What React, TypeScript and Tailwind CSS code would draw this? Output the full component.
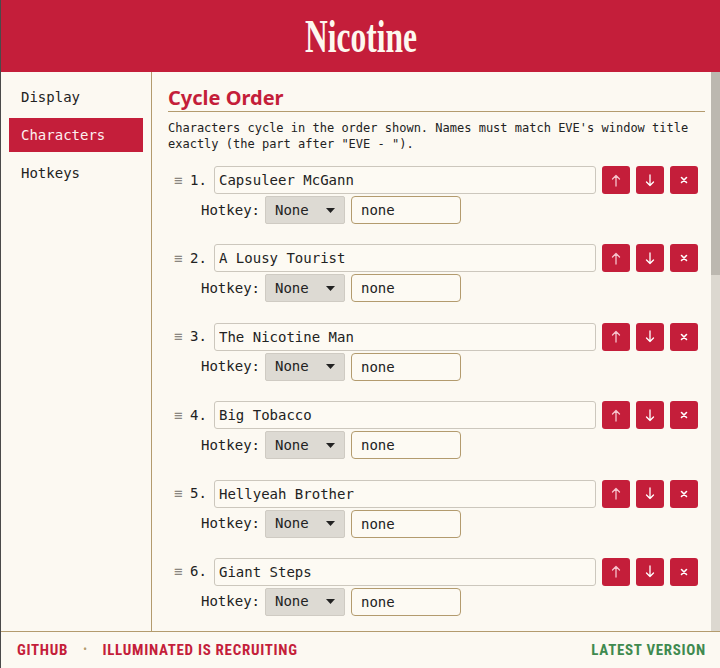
import clsx from 'clsx'

const mono = "font-['DejaVu_Sans_Mono','Liberation_Mono',monospace]"

const characters = [
  'Capsuleer McGann',
  'A Lousy Tourist',
  'The Nicotine Man',
  'Big Tobacco',
  'Hellyeah Brother',
  'Giant Steps',
  'Smoke Signal',
]

const tabs = ['Display', 'Characters', 'Hotkeys']

type Glyph = 'up' | 'down' | 'remove'

function GlyphIcon({ kind }: { kind: Glyph }) {
  if (kind === 'remove') {
    return (
      <svg width="8" height="8" viewBox="0 0 8 8" stroke="#fff" strokeWidth="1.6" strokeLinecap="round">
        <path d="M1.5 1.5l5 5M6.5 1.5l-5 5" />
      </svg>
    )
  }
  return (
    <svg
      width="10"
      height="13"
      viewBox="0 0 10 13"
      fill="none"
      stroke={kind === 'up' ? '#f6c3cc' : '#fff'}
      strokeWidth="1.3"
      strokeLinecap="round"
      strokeLinejoin="round"
      className={kind === 'down' ? 'rotate-180' : ''}
    >
      <path d="M5 1.5v10.5M1.5 5L5 1.5 8.5 5" />
    </svg>
  )
}

function IconButton({ kind }: { kind: Glyph }) {
  return (
    <button className="flex h-7 w-7 items-center justify-center rounded-[3px] bg-[#c41e3a]">
      <GlyphIcon kind={kind} />
    </button>
  )
}

function CharacterRow({ index, name }: { index: number; name: string }) {
  return (
    <div className="flex flex-col gap-[2px]">
      <div className="flex items-center">
        <span className="ml-[6px] w-[16px] text-[14px] text-[#8a8680]">≡</span>
        <span className="w-[24px] text-[14px] text-[#222]">{index}.</span>
        <input
          readOnly
          value={name}
          className={clsx(
            mono,
            'h-[28px] w-[382px] rounded-[3px] border border-[#ccc7bd] bg-[#fdfaf3] px-[4px] text-[14px] text-[#222] outline-none'
          )}
        />
        <div className="ml-[6px] flex gap-[6px]">
          <IconButton kind="up" />
          <IconButton kind="down" />
          <IconButton kind="remove" />
        </div>
      </div>
      <div className="flex items-center pl-[33px]">
        <span className="w-[64px] text-[14px] text-[#222]">Hotkey:</span>
        <div className="flex h-[28px] w-[80px] items-center justify-between rounded-[2px] border border-[#cfcbc3] bg-[#dddad3] pl-[9px] pr-[9px] text-[14px] text-[#222]">
          <span>None</span>
          <svg width="9" height="5" viewBox="0 0 9 5">
            <path d="M0 0h9L4.5 5z" fill="#222" />
          </svg>
        </div>
        <input
          readOnly
          value="none"
          className={clsx(
            mono,
            'ml-[6px] h-[28px] w-[110px] rounded-[4px] border border-[#b39b6e] bg-[#fdfaf3] px-[9px] text-[14px] text-[#222] outline-none'
          )}
        />
      </div>
    </div>
  )
}

export default function App() {
  return (
    <div className={clsx(mono, 'flex h-[668px] w-[720px] flex-col border-l border-[#4a4a4a] bg-[#fcf9f2]')}>
      <header className="flex h-[72px] shrink-0 items-center justify-center bg-[#c41e3a]">
        <span className="inline-block scale-x-[0.7] scale-y-[1.05] font-['Liberation_Serif',serif] text-[45px] font-bold leading-none text-[#fdf8ef]">
          Nicotine
        </span>
      </header>

      <div className="flex min-h-0 flex-1">
        <nav className="flex w-[151px] shrink-0 flex-col gap-[4px] border-r border-[#b39b6e] p-[8px]">
          {tabs.map((t) => (
            <div
              key={t}
              className={clsx(
                'flex h-[34px] items-center px-[12px] text-[14px]',
                t === 'Characters' ? 'bg-[#c41e3a] text-[#fdf0f0]' : 'text-[#222]'
              )}
            >
              {t}
            </div>
          ))}
        </nav>

        <main className="min-w-0 flex-1 overflow-hidden pl-[16px] pr-[6px] pt-[14px]">
          <h2 className="border-b border-[#b39b6e] pb-[1px] font-['Noto_Sans',sans-serif] text-[20px] font-bold leading-[24px] text-[#c41e3a]">
            Cycle Order
          </h2>
          <p className="mt-[8px] text-[12px] leading-[16px] text-[#222]">
            Characters cycle in the order shown. Names must match EVE's window title exactly (the part after "EVE - ").
          </p>
          <div className="mt-[14px] flex flex-col gap-[20.4px]">
            {characters.map((c, i) => (
              <CharacterRow key={c} index={i + 1} name={c} />
            ))}
          </div>
        </main>

        <div className="flex w-[9px] shrink-0 flex-col bg-[#dcd8d0]">
          <div className="h-[203px] bg-[#bcb8b0]" />
        </div>
      </div>

      <footer className="flex h-[37px] shrink-0 items-center justify-between border-t border-[#b39b6e] pl-[16px] pr-[14px] font-['Liberation_Sans_Narrow','Roboto_Condensed',Roboto,sans-serif] text-[15px] font-bold leading-[20px] tracking-[0.7px]">
        <div className="flex items-center gap-[15px]">
          <span className="text-[#c41e3a]">GITHUB</span>
          <span className="text-[10px] text-[#b39b6e]">•</span>
          <span className="text-[#c41e3a]">ILLUMINATED IS RECRUITING</span>
        </div>
        <span className="text-[#3f8a4f]">LATEST VERSION</span>
      </footer>
    </div>
  )
}
